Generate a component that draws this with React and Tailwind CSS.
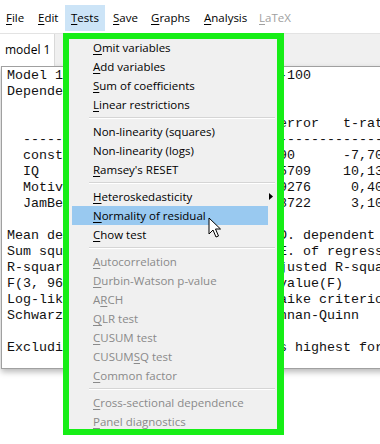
import React from "react";

function at(...pairs) {
  let s = "";
  for (let i = 0; i < pairs.length; i += 2) {
    const idx = pairs[i];
    const str = pairs[i + 1];
    while (s.length < idx) s += " ";
    s = s.slice(0, idx) + str;
  }
  return s;
}

const lines = [
  "Model 1: OLS, using observations 1-100",
  "Dependent variable: Nilai",
  "",
  at(15, "coefficient", 29, "std. error", 42, "t-ratio", 52, "p-value"),
  "  " + "-".repeat(60),
  at(2, "const", 18, "-62,6591", 29, "8,13590", 42, "-7,702", 51, "1,09e-011", 62, "***"),
  at(2, "IQ", 18, "0,572841", 29, "0,0565709", 42, "10,135", 51, "1,02e-016", 62, "***"),
  at(2, "Motivasi", 18, "0,005191", 29, "0,0129276", 43, "0,401", 51, "0,6889"),
  at(2, "JamBelajar", 18, "0,123611", 29, "0,0398722", 43, "3,100", 51, "0,0025", 62, "***"),
  "",
  at(0, "Mean dependent var", 22, "75,31000", 32, "S.D. dependent var", 52, "9,873412"),
  at(0, "Sum squared resid", 20, "3612,7540", 32, "S.E. of regression", 52, "6,134527"),
  at(0, "R-squared", 22, "0,624183", 32, "Adjusted R-squared", 52, "0,612439"),
  at(0, "F(3, 96)", 22, "53,14225", 32, "P-value(F)", 52, "1,23e-20"),
  at(0, "Log-likelihood", 20, "-321,4411", 32, "Akaike criterion", 52, "650,8822"),
  at(0, "Schwarz criterion", 21, "661,3029", 32, "Hannan-Quinn", 52, "655,0999"),
  "",
  "Excluding the constant, p-value was highest for variable 4 (Motivasi)",
];

const menuBar = [
  { t: "File", u: 0, w: "w-[32px]", pl: "pl-[6px]" },
  { t: "Edit", u: 0, w: "w-[33px]", pl: "pl-[6px]" },
  { t: "Tests", u: 0, w: "w-[40px]", pl: "pl-[6px]", active: true },
  { t: "Save", u: 0, w: "w-[40px]", pl: "pl-[8px]" },
  { t: "Graphs", u: 0, w: "w-[52px]", pl: "pl-[6px]" },
  { t: "Analysis", u: 0, w: "w-[56px]", pl: "pl-[7px]" },
  { t: "LaTeX", u: 0, w: "w-[60px]", pl: "pl-[6px]", disabled: true },
];

function Mn({ text, u }) {
  if (u < 0) return <span>{text}</span>;
  return (
    <span>
      {text.slice(0, u)}
      <span className="underline underline-offset-2">{text[u]}</span>
      {text.slice(u + 1)}
    </span>
  );
}

const items = [
  { t: "Omit variables", u: 0 },
  { t: "Add variables", u: 0 },
  { t: "Sum of coefficients", u: 0 },
  { t: "Linear restrictions", u: 0 },
  { sep: true },
  { t: "Non-linearity (squares)", u: -1 },
  { t: "Non-linearity (logs)", u: -1 },
  { t: "Ramsey's RESET", u: 0 },
  { sep: true },
  { t: "Heteroskedasticity", u: 0, sub: true },
  { t: "Normality of residual", u: 0, hl: true },
  { t: "Chow test", u: 0 },
  { sep: true },
  { t: "Autocorrelation", u: 0, dis: true },
  { t: "Durbin-Watson p-value", u: 0, dis: true },
  { t: "ARCH", u: 1, dis: true },
  { t: "QLR test", u: 0, dis: true },
  { t: "CUSUM test", u: 0, dis: true },
  { t: "CUSUMSQ test", u: 5, dis: true },
  { t: "Common factor", u: 0, dis: true },
  { sep: true },
  { t: "Cross-sectional dependence", u: 0, dis: true },
  { t: "Panel diagnostics", u: 0, dis: true },
];

export default function App() {
  const ui = { fontFamily: '"Open Sans", "Noto Sans", sans-serif' };
  return (
    <div className="relative w-[380px] h-[444px] overflow-hidden bg-white" style={ui}>
      {/* menubar */}
      <div className="flex pt-[5px] h-[31px] text-[11.5px] text-black">
        {menuBar.map((m) => (
          <div
            key={m.t}
            className={`${m.w} ${m.pl} h-[26px] flex items-center shrink-0 ${m.active ? "bg-[#cce4f7]" : ""} ${m.disabled ? "text-[#a0a0a0]" : ""}`}
          >
            <Mn text={m.t} u={m.u} />
          </div>
        ))}
      </div>

      {/* tab strip */}
      <div className="mt-[2px] h-[33px] bg-[#f0f0f0] border-t border-[#e3e3e3] flex">
        <div className="w-[55px] bg-white border-r border-[#d9d9d9] flex items-center pl-[5px] text-[12px] text-black">
          model 1
        </div>
      </div>

      {/* output box */}
      <div className="ml-[1px] -mt-[0px] h-[303px] w-[400px] border border-[#a0a0a0] bg-white shadow-[0_3px_6px_rgba(0,0,0,0.28)] pt-[1px] pl-[5px]">
        <pre
          className="text-[13.333px] leading-[16px] text-[#111] whitespace-pre overflow-hidden m-0"
          style={{ fontFamily: '"Liberation Mono", "Courier New", monospace' }}
        >
          {lines.map((l, i) => (
            <div key={i} className="h-[16px]">
              {l}
            </div>
          ))}
        </pre>
      </div>

      {/* dropdown menu with green frame */}
      <div className="absolute left-[63px] top-[33px] w-[221px] h-[402px] border-[6px] border-r-[7px] border-[#16ee16] bg-[#f0f0f0] overflow-hidden text-[11.5px]">
        <div className="-mt-[1px] flex flex-col">
          {items.map((it, i) =>
            it.sep ? (
              <div key={i} className="h-[8px] flex flex-col justify-center pl-[20px] pr-[2px]">
                <div className="h-px bg-[#d5d5d5]" />
                <div className="h-px bg-white" />
              </div>
            ) : (
              <div key={i} className="h-[19px] flex">
                <div
                  className={`relative flex-1 ml-[3px] mr-[9px] pl-[21px] flex items-center ${it.hl ? "bg-[#99c9f0]" : ""} ${it.dis ? "text-[#8a8a8a]" : "text-black"}`}
                >
                  <Mn text={it.t} u={it.u} />
                  {it.sub && (
                    <svg className="absolute right-[-5px] top-[6px]" width="4" height="7" viewBox="0 0 4 7">
                      <path d="M0 0 L4 3.5 L0 7 Z" fill="#000" />
                    </svg>
                  )}
                </div>
              </div>
            )
          )}
        </div>
      </div>

      {/* mouse cursor */}
      <svg className="absolute left-[208px] top-[217px]" width="13" height="21" viewBox="0 0 13 21">
        <path
          d="M1 1 L1 17 L5 13 L8 20 L10.5 19 L7.5 12 L12.5 12 Z"
          fill="#fff"
          stroke="#000"
          strokeWidth="1"
          strokeLinejoin="round"
        />
      </svg>
    </div>
  );
}
